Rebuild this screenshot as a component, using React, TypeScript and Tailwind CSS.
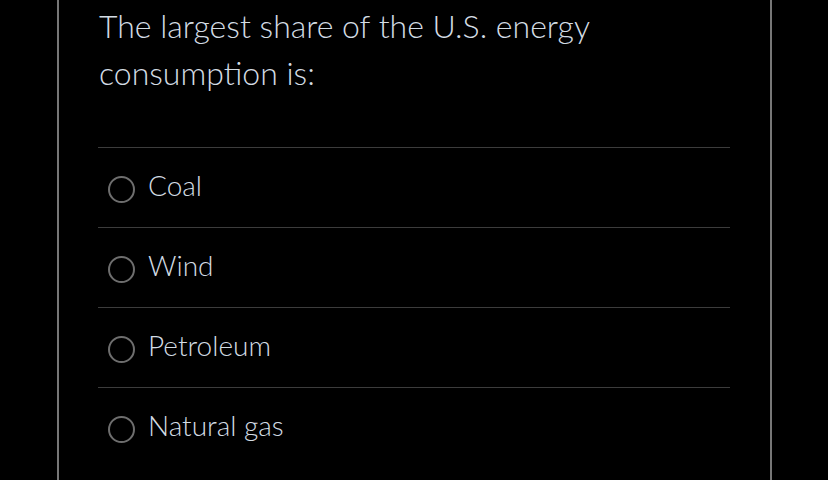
import React from "react";

const options = ["Coal", "Wind", "Petroleum", "Natural gas"];

export default function App() {
  return (
    <div
      className="w-[828px] h-[480px] bg-black overflow-hidden flex"
      style={{ fontFamily: "Lato, 'Open Sans', sans-serif" }}
    >
      <div className="ml-[57px] w-[715px] h-full border-x-2 border-[#777777] pl-[39px] pr-[40px]">
        <div className="pt-[2px] pl-[1px] text-[32px] leading-[47px] text-[#d3dce4] font-light">
          The largest share of the U.S. energy
          <br />
          consumption is:
        </div>
        <div className="mt-[51px]">
          {options.map((o) => (
            <div
              key={o}
              className="h-[80px] border-t border-[#3c3c3c] flex items-center"
            >
              <div className="ml-[10px] w-[27px] h-[27px] rounded-full border-[2.5px] border-[#6e6e6e] mt-[4px]" />
              <span className="ml-[13px] text-[28px] text-[#d3dce4] font-light mb-[6px]">{o}</span>
            </div>
          ))}
        </div>
      </div>
    </div>
  );
}
